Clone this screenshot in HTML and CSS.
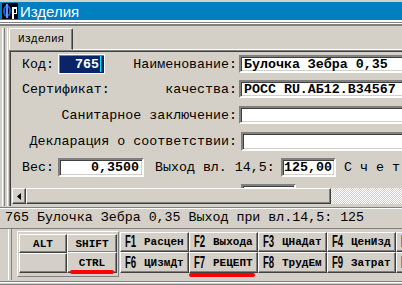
FILE: index.html
```html
<!DOCTYPE html>
<html lang="ru">
<head>
    <meta charset="UTF-8">
    <title>Изделия</title>
    <link rel="stylesheet" href="styles.css">
</head>
<body>
    <div class="window">
        <div class="titlebar">
            <svg class="appicon" width="16" height="16" viewBox="0 0 16 16">
                <rect width="16" height="16" fill="#000"/>
                <ellipse cx="5" cy="8" rx="4" ry="6" fill="#1060e0"/>
                <ellipse cx="5" cy="8" rx="2" ry="4" fill="#000"/>
                <rect x="4" y="1" width="2" height="14" fill="#6090ff"/>
                <rect x="10" y="4" width="5" height="12" fill="#fff"/>
                <rect x="12" y="6" width="2" height="4" fill="#000"/>
                <rect x="12" y="11" width="3" height="5" fill="#000"/>
            </svg>
            <span class="title">Изделия</span>
        </div>
        <div class="topline"></div>
        <div class="tabarea">
            <div class="tabs"><div class="tab">Изделия</div></div>
            <div class="page">
                <div class="pagebody">
                    <div class="form">
                        <div class="row first">
                            <span class="lbl w36">Код:</span>
                            <span class="code"><span class="codeval">765</span><span class="caret"></span></span>
                            <span class="lbl rt w132">Наименование:</span>
                            <span class="fld wide">Булочка Зебра 0,35</span>
                        </div>
                        <div class="row">
                            <span class="lbl w88">Сертификат:</span>
                            <span class="lbl rt w127">качества:</span>
                            <span class="fld wide">РОСС RU.АБ12.В34567</span>
                        </div>
                        <div class="row">
                            <span class="lbl rt w215">Санитарное заключение:</span>
                            <span class="fld wide"></span>
                        </div>
                        <div class="row">
                            <span class="lbl rt w215">Декларация о соответствии:</span>
                            <span class="fld wide tall far"></span>
                        </div>
                        <div class="row">
                            <span class="lbl w36">Вес:</span>
                            <span class="fld tall num w86">0,3500</span>
                            <span class="lbl gap11">Выход вл. 14,5:</span>
                            <span class="fld tall num w55">125,00</span>
                            <span class="lbl spaced">Счета</span>
                        </div>
                        <div class="row">
                            <span class="lbl w215"></span>
                            <span class="fld tall w55 far"></span>
                        </div>
                    </div>
                    <div class="hscroll">
                        <div class="sbtn">
                            <svg width="4" height="7" viewBox="0 0 4 7"><path d="M4 0 L0 3.5 L4 7 Z" fill="#000"/></svg>
                        </div>
                        <div class="thumb"></div>
                        <div class="track"></div>
                    </div>
                </div>
            </div>
        </div>
        <div class="status">765 Булочка Зебра 0,35 Выход при вл.14,5: 125</div>
        <div class="keys">
            <div class="mods">
                <div class="btn mod">ALT</div>
                <div class="btn mod">SHIFT</div>
                <div class="btn mod"></div>
                <div class="btn mod ctrl">CTRL<span class="mark"></span></div>
            </div>
            <div class="fgrid">
                <div class="btn fk"><span class="fn">F1</span><span class="fl">Расцен</span></div>
                <div class="btn fk"><span class="fn">F2</span><span class="fl">Выхода</span></div>
                <div class="btn fk"><span class="fn">F3</span><span class="fl">ЦНаДат</span></div>
                <div class="btn fk"><span class="fn">F4</span><span class="fl">ЦенИзд</span></div>
                <div class="btn fk"><span class="fn">F5</span><span class="fl">Печать</span></div>
                <div class="btn fk"><span class="fn">F6</span><span class="fl">ЦИзмДт</span></div>
                <div class="btn fk f7"><span class="fn">F7</span><span class="fl">РЕЦЕПТ</span><span class="mark"></span></div>
                <div class="btn fk"><span class="fn">F8</span><span class="fl">ТрудЕм</span></div>
                <div class="btn fk"><span class="fn">F9</span><span class="fl">Затрат</span></div>
                <div class="btn fk"><span class="fn">F10</span><span class="fl">Выход</span></div>
            </div>
        </div>
        <div class="bottomline"></div>
    </div>
</body>
</html>
```

FILE: styles.css
```css
* {
    box-sizing: border-box;
}
body {
    margin: 0;
    background: #d4d0c8;
    font-family: "Liberation Mono", "Courier New", monospace;
    font-size: 13.3px;
    color: #000;
}
.window {
    width: 402px;
    height: 285px;
    overflow: hidden;
    padding-top: 2px;
}
.titlebar {
    height: 18px;
    background: #0080c0;
    display: flex;
    align-items: center;
    padding-left: 2px;
}
.appicon {
    display: block;
}
.title {
    color: #fff;
    font: 15px "Liberation Sans", Arial, sans-serif;
    margin-left: 2px;
}
.topline {
    height: 8px;
    background: linear-gradient(#fff 0 2px, #808080 2px 3px, #fff 3px 4px, #808080 4px 6px, #d4d0c8 6px);
}
.tabarea {
    background: linear-gradient(to right, #d4d0c8 0 2px, #fff 2px 3px, #d4d0c8 3px 4px, #808080 4px 5px, #d4d0c8 5px 7px, #fff 7px 8px, #d4d0c8 8px);
}
.tabs {
    height: 21px;
    padding-left: 9px;
    display: flex;
    align-items: flex-end;
}
.tab {
    position: relative;
    z-index: 1;
    height: 22px;
    width: 64px;
    margin-bottom: -1px;
    background: #d4d0c8;
    border: 1px solid;
    border-color: #fff #404040 #d4d0c8 #fff;
    box-shadow: inset -1px 0 #808080;
    border-radius: 2px 2px 0 0;
    font-size: 11px;
    display: flex;
    align-items: center;
    justify-content: center;
}
.page {
    margin-left: 9px;
    border-top: 1px solid #fff;
    background: #d4d0c8;
}
.pagebody {
    border-top: 1px solid #808080;
    border-left: 1px solid #808080;
    box-shadow: inset 1px 1px #404040;
    padding: 1px 0 2px 0;
}
.form {
    height: 136px;
    overflow: hidden;
    padding-left: 12px;
}
.row {
    display: flex;
    align-items: center;
    height: 26px;
    white-space: nowrap;
}
.row.first {
    height: 24px;
}
.lbl {
    flex: none;
}
.rt {
    text-align: right;
}
.w36 { width: 36px; }
.w88 { width: 88px; }
.w127 { width: 127px; }
.w132 { width: 132px; }
.w215 { width: 215px; }
.gap11 { margin-left: 11px; width: 124px; }
.spaced {
    margin-left: 8px;
    letter-spacing: 8px;
}
.fld {
    flex: none;
    height: 18px;
    margin-left: 2px;
    background: #fff;
    border: 2px solid;
    border-color: #808080 #fff #fff #808080;
    box-shadow: inset 1px 1px #404040, inset -1px -1px #d4d0c8;
    font-weight: bold;
    display: flex;
    align-items: center;
    padding: 0 3px;
}
.fld.tall {
    height: 19px;
}
.fld.far {
    margin-left: 4px;
}
.wide {
    width: 200px;
}
.w86 {
    width: 86px;
    margin-left: 0;
}
.w55 {
    width: 55px;
    padding: 0 2px;
}
.num {
    justify-content: flex-end;
}
.code {
    flex: none;
    width: 47px;
    height: 20px;
    border: 1px solid #fff;
    box-shadow: inset 1px 1px #808080;
    background: #0a246a;
    color: #fff;
    font-weight: bold;
    display: flex;
    align-items: center;
    justify-content: flex-end;
    padding-right: 2px;
}
.caret {
    width: 2px;
    height: 16px;
    margin-left: 1px;
    background: linear-gradient(to right, #00e0ff 0 1px, #ff0000 1px);
}
.hscroll {
    display: flex;
    height: 16px;
    margin-left: 2px;
}
.sbtn, .thumb, .btn {
    background: #d4d0c8;
    border: 1px solid;
    border-color: #fff #404040 #404040 #fff;
    box-shadow: inset -1px -1px #808080;
}
.sbtn {
    width: 14px;
    display: flex;
    align-items: center;
    justify-content: center;
}
.sbtn svg {
    display: block;
}
.thumb {
    width: 305px;
}
.track {
    flex: 1;
    background: repeating-conic-gradient(#fff 0 25%, #d4d0c8 0 50%) 0 0 / 2px 2px;
}
.status {
    margin-top: 1px;
    height: 22px;
    border-top: 1px solid #808080;
    border-bottom: 1px solid #808080;
    box-shadow: inset 0 1px #fff, 0 1px #fff;
    padding-left: 5px;
    line-height: 19px;
    white-space: nowrap;
}
.keys {
    display: flex;
    align-items: flex-start;
    height: 51px;
    padding: 2px 0 0 17px;
    background: linear-gradient(to right, #d4d0c8 0 8px, #fff 8px 9px, #d4d0c8 9px 11px, #808080 11px 12px, #d4d0c8 12px);
}
.mods {
    flex: none;
    width: 102px;
    height: 46px;
    border: 1px solid;
    border-color: #fff #808080 #808080 #fff;
    padding: 2px 1px;
    display: grid;
    grid-template-columns: 48px 50px;
    grid-template-rows: 19px 20px;
}
.mod {
    position: relative;
    font-size: 11px;
    font-weight: bold;
    display: flex;
    align-items: center;
    justify-content: center;
}
.ctrl {
    margin-top: -1px;
}
.fgrid {
    flex: none;
    margin: 1px 0 0 1px;
    display: grid;
    grid-template-columns: repeat(5, 69px);
    grid-template-rows: 20px 21px;
}
.fk {
    position: relative;
    display: flex;
    align-items: center;
    padding-left: 4px;
    white-space: nowrap;
}
.fn {
    display: inline-block;
    width: 11px;
    font: bold 16px "Liberation Sans", Arial, sans-serif;
    transform: scaleX(0.6);
    transform-origin: left center;
}
.fl {
    margin-left: 8px;
    font-size: 11px;
    font-weight: bold;
}
.mark {
    position: absolute;
    height: 4px;
    background: #f00;
    border-radius: 2px;
}
.ctrl .mark {
    left: 2px;
    width: 44px;
    bottom: -2px;
}
.f7 .mark {
    left: -1px;
    width: 66px;
    bottom: -5px;
}
.bottomline {
    height: 6px;
    background: linear-gradient(#d4d0c8 0 1px, #808080 1px 2px, #fff 2px 3px, #d4d0c8 3px 4px, #808080 4px 5px, #d4d0c8 5px);
}
```
